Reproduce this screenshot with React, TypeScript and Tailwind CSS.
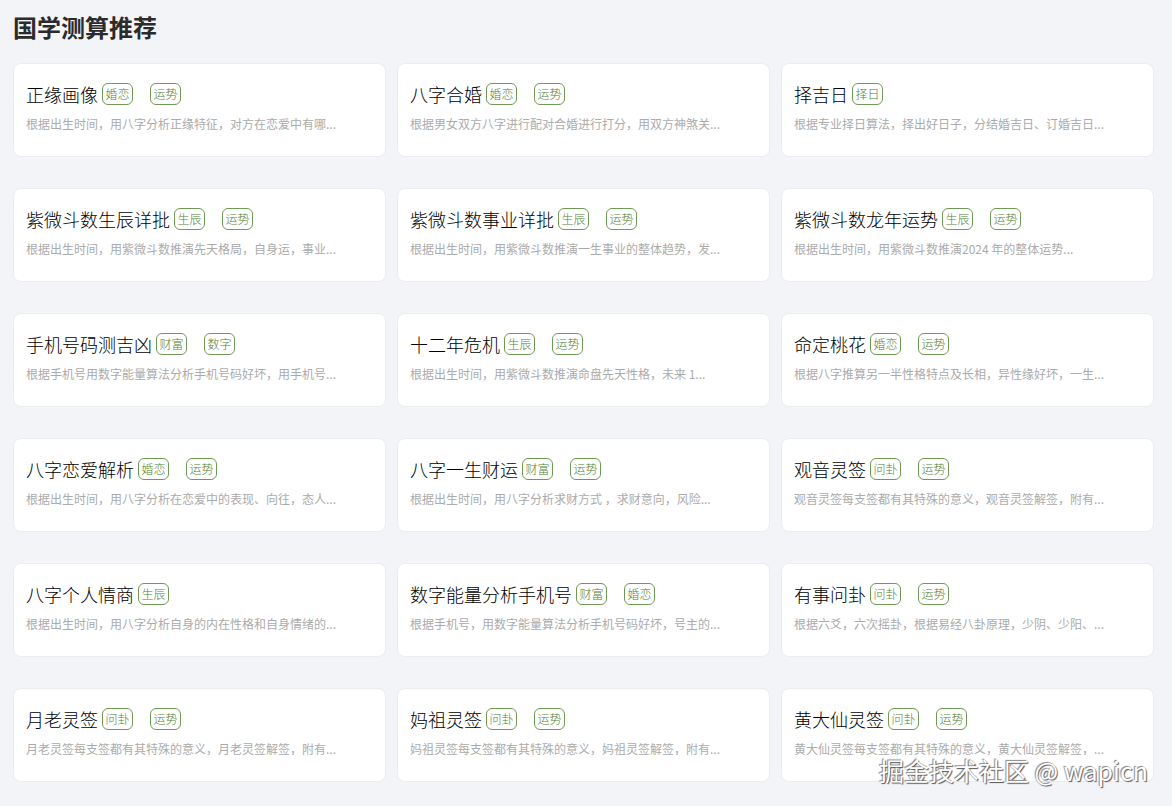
import React from 'react';

interface Item {
  title: string;
  tags: string[];
  desc: string;
}

const items: Item[] = [
  { title: '正缘画像', tags: ['婚恋', '运势'], desc: '根据出生时间，用八字分析正缘特征，对方在恋爱中有哪...' },
  { title: '八字合婚', tags: ['婚恋', '运势'], desc: '根据男女双方八字进行配对合婚进行打分，用双方神煞关...' },
  { title: '择吉日', tags: ['择日'], desc: '根据专业择日算法，择出好日子，分结婚吉日、订婚吉日...' },
  { title: '紫微斗数生辰详批', tags: ['生辰', '运势'], desc: '根据出生时间，用紫微斗数推演先天格局，自身运，事业...' },
  { title: '紫微斗数事业详批', tags: ['生辰', '运势'], desc: '根据出生时间，用紫微斗数推演一生事业的整体趋势，发...' },
  { title: '紫微斗数龙年运势', tags: ['生辰', '运势'], desc: '根据出生时间，用紫微斗数推演2024 年的整体运势...' },
  { title: '手机号码测吉凶', tags: ['财富', '数字'], desc: '根据手机号用数字能量算法分析手机号码好坏，用手机号...' },
  { title: '十二年危机', tags: ['生辰', '运势'], desc: '根据出生时间，用紫微斗数推演命盘先天性格，未来 1...' },
  { title: '命定桃花', tags: ['婚恋', '运势'], desc: '根据八字推算另一半性格特点及长相，异性缘好坏，一生...' },
  { title: '八字恋爱解析', tags: ['婚恋', '运势'], desc: '根据出生时间，用八字分析在恋爱中的表现、向往，态人...' },
  { title: '八字一生财运', tags: ['财富', '运势'], desc: '根据出生时间，用八字分析求财方式 ，求财意向，风险...' },
  { title: '观音灵签', tags: ['问卦', '运势'], desc: '观音灵签每支签都有其特殊的意义，观音灵签解签，附有...' },
  { title: '八字个人情商', tags: ['生辰'], desc: '根据出生时间，用八字分析自身的内在性格和自身情绪的...' },
  { title: '数字能量分析手机号', tags: ['财富', '婚恋'], desc: '根据手机号，用数字能量算法分析手机号码好坏，号主的...' },
  { title: '有事问卦', tags: ['问卦', '运势'], desc: '根据六爻，六次摇卦，根据易经八卦原理，少阴、少阳、...' },
  { title: '月老灵签', tags: ['问卦', '运势'], desc: '月老灵签每支签都有其特殊的意义，月老灵签解签，附有...' },
  { title: '妈祖灵签', tags: ['问卦', '运势'], desc: '妈祖灵签每支签都有其特殊的意义，妈祖灵签解签，附有...' },
  { title: '黄大仙灵签', tags: ['问卦', '运势'], desc: '黄大仙灵签每支签都有其特殊的意义，黄大仙灵签解签，...' },
];

const Card: React.FC<{ item: Item }> = ({ item }) => (
  <div className="h-[94px] rounded-lg border border-[#ebedf0] bg-white px-[12px] pt-[18px]">
    <div className="flex items-center h-[24px]">
      <span className="text-[18px] font-light leading-[24px] text-black">{item.title}</span>
      {item.tags.map((t) => (
        <span
          key={t}
          className="ml-[4px] mr-[13px] h-[22px] px-[2.5px] rounded-[6px] border border-[#6f9a53] text-[12px] font-light leading-[20px] text-[#4f7f34]"
        >
          {t}
        </span>
      ))}
    </div>
    <div className="mt-[10px] text-[12px] leading-[16px] text-[#ababab] truncate">{item.desc}</div>
  </div>
);

export default function App() {
  return (
    <div
      className="relative min-h-[806px] w-[1172px] bg-[#f3f4f8] pl-[13px] pr-[18px] pt-[11px]"
      style={{ fontFamily: '"Noto Sans CJK SC", "Liberation Sans", sans-serif' }}
    >
      <h1 className="text-[24px] font-bold leading-[32px] text-[#2b2b2b]">国学测算推荐</h1>
      <div className="mt-[20px] grid grid-cols-3 gap-x-[11px] gap-y-[31px]">
        {items.map((it) => (
          <Card key={it.title} item={it} />
        ))}
      </div>
      <div
        className="absolute right-[24px] bottom-[20px] text-[25px] leading-[32px] text-white"
        style={{ textShadow: '1px 1px 1px #555, -1px -1px 1px #888' }}
      >
        掘金技术社区 @ wapicn
      </div>
    </div>
  );
}
